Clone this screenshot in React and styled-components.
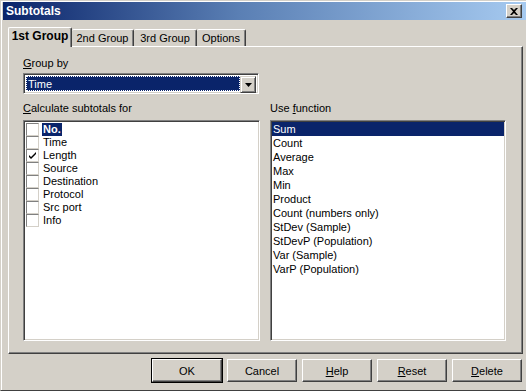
import React from "react";
import styled, { createGlobalStyle } from "styled-components";

const GlobalStyle = createGlobalStyle`
  html, body {
    margin: 0;
    padding: 0;
    background: #d4d0c8;
  }
  body {
    font-family: "Liberation Sans", Arial, sans-serif;
    font-size: 11px;
    color: #000;
  }
`;

const Window = styled.div`
  width: 526px;
  height: 391px;
  box-sizing: border-box;
  background: #d4d0c8;
  border-left: 1px solid #d4d0c8;
  border-top: 1px solid #d4d0c8;
  box-shadow: inset 1px 1px 0 #ffffff;
  padding: 1px 0 0 2px;
  display: flex;
  flex-direction: column;
  position: relative;
  border-bottom: 1px solid #404040;
`;

const TitleBar = styled.div`
  height: 18px;
  display: flex;
  align-items: center;
  justify-content: space-between;
  padding: 0 4px 0 3px;
  background: linear-gradient(to right, #0a246a 0%, #5a7fb4 45%, #a6caf0 100%);
  color: #fff;
  font-weight: bold;
  font-size: 12px;
`;

const CloseButton = styled.div`
  width: 16px;
  height: 14px;
  box-sizing: border-box;
  background: #d4d0c8;
  border-top: 1px solid #fff;
  border-left: 1px solid #fff;
  border-right: 1px solid #404040;
  border-bottom: 1px solid #404040;
  box-shadow: inset -1px -1px 0 #808080;
  display: flex;
  align-items: center;
  justify-content: center;
`;

const Body = styled.div`
  flex: 1;
  display: flex;
  flex-direction: column;
  padding: 7px 3px 0 5px;
`;

const TabStrip = styled.div`
  display: flex;
  align-items: flex-end;
  height: 19px;
  position: relative;
  z-index: 2;
`;

const Tab = styled.div`
  box-sizing: border-box;
  width: ${(p) => p.$w}px;
  height: ${(p) => (p.$active ? 20 : 17)}px;
  border-top: 1px solid #fff;
  border-left: ${(p) => (p.$first || p.$active ? "1px solid #fff" : "none")};
  border-right: 1px solid #404040;
  box-shadow: inset -1px 0 0 #808080;
  border-radius: 2px 2px 0 0;
  background: #d4d0c8;
  display: flex;
  align-items: center;
  justify-content: center;
  padding-bottom: ${(p) => (p.$active ? 3 : 1)}px;
  font-weight: ${(p) => (p.$active ? "bold" : "normal")};
  font-size: ${(p) => (p.$active ? "12px" : "11px")};
  margin-bottom: ${(p) => (p.$active ? -1 : 0)}px;
`;

const Panel = styled.div`
  box-sizing: border-box;
  height: 308px;
  border-top: 1px solid #fff;
  border-left: 1px solid #fff;
  border-right: 1px solid #404040;
  border-bottom: 1px solid #404040;
  box-shadow: inset -1px -1px 0 #808080;
  padding: 10px 13px 0 14px;
  display: flex;
  flex-direction: column;
`;

const Label = styled.div`
  height: 13px;
  line-height: 13px;
  margin-bottom: ${(p) => p.$mb || 0}px;
  u {
    text-decoration: underline;
  }
`;

const Sunken = styled.div`
  box-sizing: border-box;
  border-top: 1px solid #808080;
  border-left: 1px solid #808080;
  border-right: 1px solid #fff;
  border-bottom: 1px solid #fff;
  box-shadow: inset 1px 1px 0 #404040, inset -1px -1px 0 #d4d0c8;
  background: #fff;
`;

const Dropdown = styled(Sunken)`
  width: 236px;
  height: 21px;
  padding: 2px;
  display: flex;
`;

const DropValue = styled.div`
  flex: 1;
  background: #0a246a;
  color: #fff;
  outline: 1px dotted #fff;
  outline-offset: -1px;
  line-height: 17px;
  padding-left: 2px;
`;

const DropButton = styled.div`
  width: 16px;
  height: 17px;
  box-sizing: border-box;
  background: #d4d0c8;
  border-top: 1px solid #d4d0c8;
  border-left: 1px solid #d4d0c8;
  border-right: 1px solid #404040;
  border-bottom: 1px solid #404040;
  box-shadow: inset 1px 1px 0 #fff, inset -1px -1px 0 #808080;
  display: flex;
  align-items: center;
  justify-content: center;
`;

const Columns = styled.div`
  display: grid;
  grid-template-columns: 237px 236px;
  column-gap: 10px;
  margin-top: 8px;
`;

const ListBox = styled(Sunken)`
  height: 221px;
  padding: ${(p) => (p.$check ? "2px 2px 2px 2px" : "1px 1px 2px 1px")};
  overflow: hidden;
`;

const CheckRow = styled.div`
  height: 13px;
  display: flex;
  align-items: center;
  gap: 3px;
`;

const CheckBox = styled.div`
  width: 13px;
  height: 13px;
  box-sizing: border-box;
  border-top: 1px solid #808080;
  border-left: 1px solid #808080;
  border-right: 1px solid #d4d0c8;
  border-bottom: 1px solid #d4d0c8;
  background: #fff;
  display: flex;
  align-items: center;
  justify-content: center;
`;

const CheckText = styled.span`
  line-height: 13px;
  padding: 0 1px;
  background: ${(p) => (p.$sel ? "#0a246a" : "transparent")};
  color: ${(p) => (p.$sel ? "#fff" : "#000")};
  font-weight: ${(p) => (p.$sel ? "bold" : "normal")};
`;

const FuncRow = styled.div`
  height: 14px;
  line-height: 14px;
  padding-left: 1px;
  background: ${(p) => (p.$sel ? "#0a246a" : "transparent")};
  color: ${(p) => (p.$sel ? "#fff" : "#000")};
`;

const ButtonRow = styled.div`
  display: flex;
  justify-content: flex-end;
  gap: 5px;
  margin-top: 5px;
  padding-right: 1px;
`;

const Button = styled.div`
  width: 70px;
  height: 23px;
  box-sizing: border-box;
  background: #d4d0c8;
  border-top: 1px solid #fff;
  border-left: 1px solid #fff;
  border-right: 1px solid #404040;
  border-bottom: 1px solid #404040;
  box-shadow: inset -1px -1px 0 #808080;
  outline: ${(p) => (p.$default ? "1px solid #000" : "none")};
  display: flex;
  align-items: center;
  justify-content: center;
  u {
    text-decoration: underline;
  }
`;

const fields = ["No.", "Time", "Length", "Source", "Destination", "Protocol", "Src port", "Info"];
const funcs = [
  "Sum",
  "Count",
  "Average",
  "Max",
  "Min",
  "Product",
  "Count (numbers only)",
  "StDev (Sample)",
  "StDevP (Population)",
  "Var (Sample)",
  "VarP (Population)",
];

export default function App() {
  return (
    <>
      <GlobalStyle />
      <Window>
        <TitleBar>
          <span>Subtotals</span>
          <CloseButton>
            <svg width="8" height="7" viewBox="0 0 8 7">
              <path d="M0 0h2l2 2 2-2h2L5 3.5 8 7H6L4 5 2 7H0l3-3.5z" fill="#000" />
            </svg>
          </CloseButton>
        </TitleBar>
        <Body>
          <TabStrip>
            <Tab $w={64} $active $first>1st Group</Tab>
            <Tab $w={62}>2nd Group</Tab>
            <Tab $w={63}>3rd Group</Tab>
            <Tab $w={49}>Options</Tab>
          </TabStrip>
          <Panel>
            <Label $mb={3}><u>G</u>roup by</Label>
            <Dropdown>
              <DropValue>Time</DropValue>
              <DropButton>
                <svg width="7" height="4" viewBox="0 0 7 4">
                  <path d="M0 0h7L3.5 4z" fill="#000" />
                </svg>
              </DropButton>
            </Dropdown>
            <Columns>
              <div>
                <Label $mb={5}><u>C</u>alculate subtotals for</Label>
                <ListBox $check>
                  {fields.map((f, i) => (
                    <CheckRow key={f}>
                      <CheckBox>
                        {f === "Length" && (
                          <svg width="7" height="7" viewBox="0 0 7 7">
                            <path d="M0 3l2 2 5-5v2L2 7 0 5z" fill="#000" />
                          </svg>
                        )}
                      </CheckBox>
                      <CheckText $sel={i === 0}>{f}</CheckText>
                    </CheckRow>
                  ))}
                </ListBox>
              </div>
              <div>
                <Label $mb={5}>Use <u>f</u>unction</Label>
                <ListBox>
                  {funcs.map((f, i) => (
                    <FuncRow key={f} $sel={i === 0}>{f}</FuncRow>
                  ))}
                </ListBox>
              </div>
            </Columns>
          </Panel>
          <ButtonRow>
            <Button $default>OK</Button>
            <Button>Cancel</Button>
            <Button><u>H</u>elp</Button>
            <Button><u>R</u>eset</Button>
            <Button><u>D</u>elete</Button>
          </ButtonRow>
        </Body>
      </Window>
    </>
  );
}
